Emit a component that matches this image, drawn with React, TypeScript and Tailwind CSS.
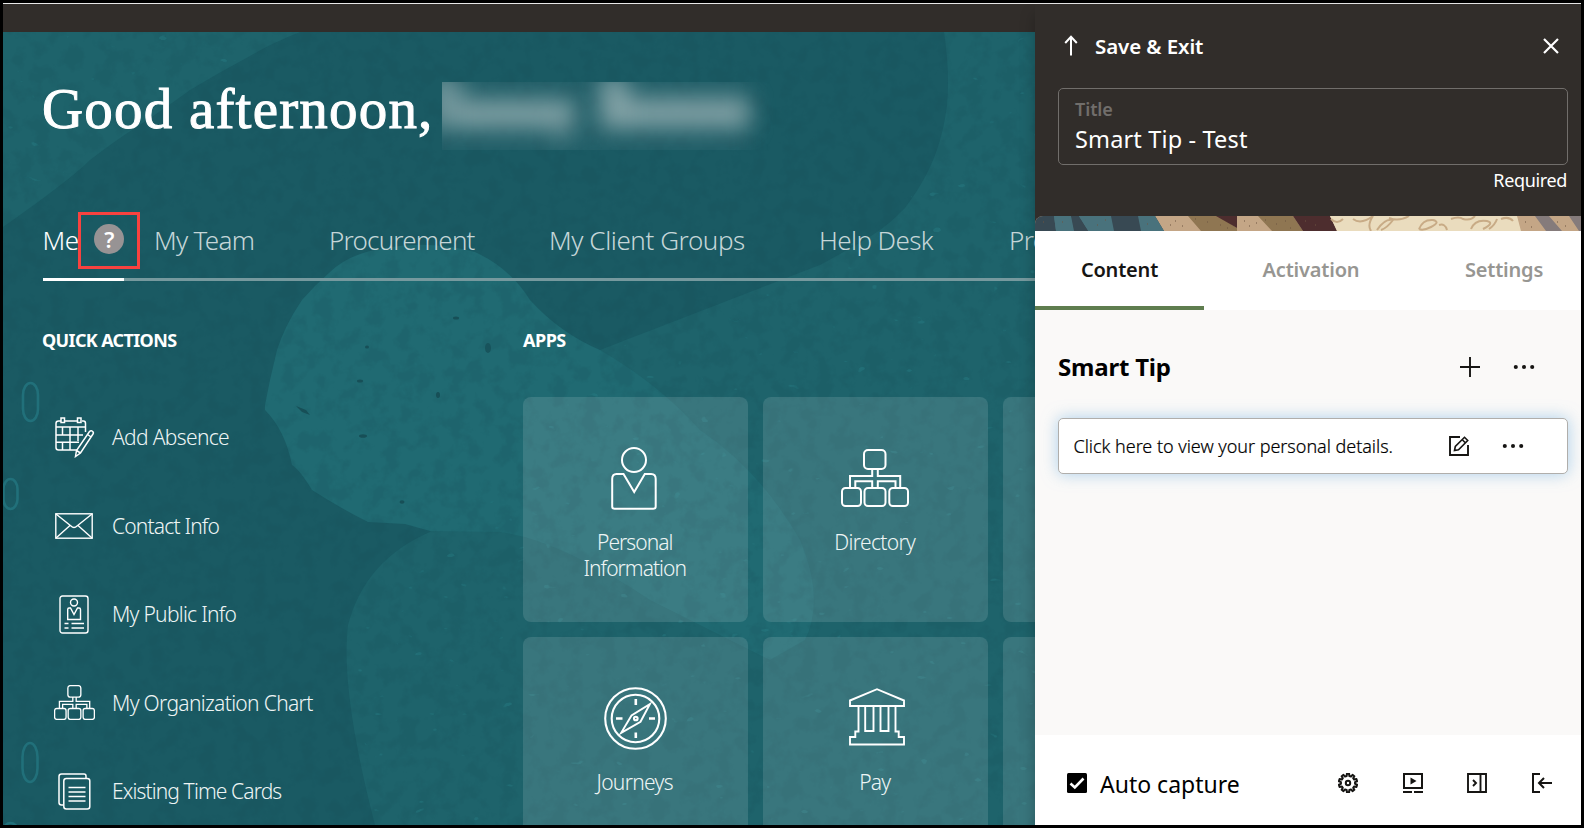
import React from "react";

const sans = "font-['Noto_Sans',sans-serif]";

function Backdrop() {
  return (
    <svg className="absolute inset-0 h-full w-full" viewBox="3 32 1032 793" preserveAspectRatio="none">
      <defs>
        <filter id="mottle" x="0" y="0" width="100%" height="100%" colorInterpolationFilters="sRGB">
          <feTurbulence type="fractalNoise" baseFrequency="0.06" numOctaves="4" seed="4" />
          <feColorMatrix values="0 0 0 0 0.09  0 0 0 0 0.30  0 0 0 0 0.34  5 0 0 0 -2.3" />
        </filter>
        <filter id="flecks" x="0" y="0" width="100%" height="100%" colorInterpolationFilters="sRGB">
          <feTurbulence type="fractalNoise" baseFrequency="0.07 0.12" numOctaves="2" seed="11" />
          <feColorMatrix values="0 0 0 0 0.16  0 0 0 0 0.50  0 0 0 0 0.53  14 0 0 0 -10.8" />
        </filter>
        <clipPath id="pale">
          <path d="M3 32H300L190 90L90 160L3 227ZM962 32L958 110L905 208L820 265L600 350L430 532L350 625L375 825H1035V32Z" />
        </clipPath>
      </defs>
      <rect x="3" y="32" width="1032" height="793" fill="#1a5a63" />
      <path d="M3 32H300Q270 44 250 56Q220 72 190 90Q160 112 132 130Q112 143 90 160Q70 180 3 227Z" fill="#1e636b" />
      <path d="M944 32C948 60 949 80 947 105C942 145 930 175 905 208C880 235 850 248 820 265C780 280 730 300 600 350L430 532Q365 560 348 625Q340 690 375 825H1035V32Z" fill="#1e636b" />
      <path d="M265 405L270 380L277 350Q285 325 302 300Q315 285 330 272Q350 253 385 248Q430 240 475 252Q510 268 530 300Q560 333 600 350Q660 385 700 430Q760 470 800 540Q825 600 805 640L770 660L650 600Q560 540 500 532L430 531L405 524L368 522Q340 508 312 490Q300 470 292 465Q285 430 265 410Z" fill="#206a72" />
      <rect x="3" y="32" width="1032" height="793" filter="url(#mottle)" opacity="0.17" />
      <g clipPath="url(#pale)">
        <rect x="3" y="32" width="1032" height="793" filter="url(#flecks)" opacity="0.4" />
      </g>
      <g fill="none" stroke="#21707a" strokeWidth="2.6">
        <rect x="23" y="383" width="15" height="38" rx="7.5" ry="12" />
        <rect x="3.500" y="479" width="14" height="30" rx="7" ry="10" />
        <rect x="22.500" y="743" width="15" height="39" rx="7.5" ry="14" />
        <rect x="3.500" y="823" width="14" height="30" rx="7" />
      </g>
      <g fill="#174f57">
        <ellipse cx="488" cy="348" rx="3" ry="5" opacity="0.8" />
        <path d="M296 406l10 4 4 5-8-3z" />
        <ellipse cx="360" cy="381" rx="3" ry="1.500" />
        <ellipse cx="438" cy="395" rx="2" ry="3" />
        <ellipse cx="363" cy="436" rx="4" ry="1.800" />
        <ellipse cx="367" cy="347" rx="2" ry="1.500" />
        <ellipse cx="402" cy="502" rx="2.500" ry="1.800" />
        <ellipse cx="456" cy="318" rx="3" ry="1.500" />
      </g>
    </svg>
  );
}

function OrgChart({ className, stroke }: { className: string; stroke: number }) {
  return (
    <svg className={className} viewBox="0 0 68 58" fill="none" stroke="white" strokeWidth={stroke}>
      <rect x="23" y="1" width="21.500" height="19" rx="4" />
      <rect x="1" y="39" width="19" height="18" rx="3.500" />
      <rect x="23.500" y="39" width="21" height="18" rx="3.500" />
      <rect x="48.300" y="39" width="18.700" height="18" rx="3.500" />
      <path d="M31.200 20V27H9V39M36.800 20V27H59.200V39M31.200 39V32.200H14.300V39M36.800 39V32.200H54.500V39" />
    </svg>
  );
}

const CalendarIcon = () => (
  <svg className="ml-[2px] h-[41px] w-[40px]" viewBox="0 0 40 41" fill="none" stroke="white" strokeWidth="1.500">
    <path d="M6 4H3.500Q1 4 1 6.500V30.500Q1 33 3.500 33H22M10 4H22M27 4H28.500Q30.500 4 30.500 6.500V15M1 10H30.500M1 18H28M1 25.300H24M7.500 10V17.500M15 10V33M23 10V24M7.500 25.500V33" />
    <rect x="6" y="1" width="3.500" height="4.500" />
    <rect x="22.500" y="1" width="3.500" height="4.500" />
    <path d="M34.500 14.500Q36 13 37.500 14.300Q39 15.500 38 17L25.500 36L20.500 39.500L21.500 33.500ZM32.500 17.500L36.200 20M21.500 33.500L25.500 36" />
  </svg>
);

const MailIcon = () => (
  <svg className="h-[26px] w-[38px]" viewBox="0 0 38 26" fill="none" stroke="white" strokeWidth="1.400">
    <rect x="0.800" y="0.800" width="36.400" height="24.400" />
    <path d="M1 1L16 13Q19 16 22 13L37 1M1 25L15 12.500M37 25L23 12.500" />
  </svg>
);

const BadgeIcon = () => (
  <svg className="h-[39px] w-[30px]" viewBox="0 0 30 39" fill="none" stroke="white" strokeWidth="1.400">
    <rect x="1" y="1" width="28" height="37" rx="2.500" />
    <circle cx="15" cy="7.500" r="3.500" />
    <path d="M11.500 13H10Q8.700 13 8.700 14.500V24.500H21.500V14.500Q21.500 13 20 13H18.500L15 19.500ZM5.500 28.500H9.500M12.500 28.500H25M5.500 33H9.500M12.500 33H25" />
  </svg>
);

const CardsIcon = () => (
  <svg className="h-[37px] w-[33px]" viewBox="0 0 33 37" fill="none" stroke="white" strokeWidth="1.500">
    <path d="M28 5.500V3Q28 1 26 1H3.500Q1 1 1 3.500V29.500Q1 32 3.500 32H5.500" />
    <rect x="5.800" y="5.500" width="26" height="30.500" rx="2.500" />
    <path d="M10.500 14.500H27.500M10.500 19H27.500M10.500 23.500H27.500M10.500 28H27.500" />
  </svg>
);

const PersonIcon = () => (
  <svg className="mr-[3px] h-[63px] w-[46px]" viewBox="0 0 46 63" fill="none" stroke="white" strokeWidth="2">
    <circle cx="23" cy="13" r="12" />
    <path d="M12.500 27H5.500Q1.200 27 1.200 32V59.500Q1.200 61.800 3.500 61.800H42.300Q44.700 61.800 44.700 59.500V32Q44.700 27 40.200 27H33.800L23.200 45Z" />
  </svg>
);

const CompassIcon = () => (
  <svg className="h-[63px] w-[63px]" viewBox="0 0 63 63" fill="none" stroke="white" strokeWidth="2.100">
    <circle cx="31.500" cy="31.500" r="30.300" />
    <circle cx="31.500" cy="31.500" r="23.800" />
    <path d="M45.800 17.200L36.500 34.800L17.200 45.800L27.500 28.500Z" strokeWidth="1.900" />
    <circle cx="31.800" cy="31.500" r="1.800" />
    <path d="M31.800 12V18M31.800 45.500V51M12 31.500H18.500M45 31.500H51" strokeWidth="2.600" />
  </svg>
);

const BankIcon = () => (
  <svg className="mb-[3px] ml-[2px] h-[58px] w-[56px]" viewBox="0 0 56 58" fill="none" stroke="white" strokeWidth="1.900">
    <path d="M1 12.500L28 1.200L55 12.500V18H1ZM9.500 18V43.500H6.300V49H1V56.500H55V49H49.700V43.500H46.500V18M16.200 18V43H24.500V18M31.500 18V43H39.500V18" />
  </svg>
);

const actions = [
  { label: "Add Absence", icon: <CalendarIcon />, cls: "tracking-[-0.66px]" },
  { label: "Contact Info", icon: <MailIcon />, cls: "tracking-[-0.82px]" },
  { label: "My Public Info", icon: <BadgeIcon />, cls: "tracking-[-0.72px]" },
  { label: "My Organization Chart", icon: <OrgChart className="h-[35px] w-[41px]" stroke={2.2} />, cls: "tracking-[-0.67px]" },
  { label: "Existing Time Cards", icon: <CardsIcon />, cls: "tracking-[-0.88px]" },
];

const apps = [
  { label: ["Personal", "Information"], icon: <PersonIcon />, cls: "tracking-[-0.97px]" },
  { label: ["Directory"], icon: <OrgChart className="mr-[1px] h-[58px] w-[68px]" stroke={2} />, cls: "tracking-[-0.68px]" },
  { label: [], icon: null, cls: "" },
  { label: ["Journeys"], icon: <CompassIcon />, cls: "tracking-[-0.68px]" },
  { label: ["Pay"], icon: <BankIcon />, cls: "tracking-[-0.8px]" },
  { label: [], icon: null, cls: "" },
];

const tabs = [
  { label: "My Team", cls: "w-[175px] tracking-[-0.7px]" },
  { label: "Procurement", cls: "w-[220px] tracking-[-0.78px]" },
  { label: "My Client Groups", cls: "w-[270px] tracking-[-0.42px]" },
  { label: "Help Desk", cls: "w-[190px] tracking-[-0.6px]" },
  { label: "Pro", cls: "w-[26px] tracking-[-0.68px]" },
];

function HomePage() {
  return (
    <div className="flex w-[1032px] shrink-0 flex-col overflow-hidden">
      <div className="h-[28px] shrink-0 bg-[#312d2a]" />
      <div className="relative h-[793px] overflow-hidden text-white">
        <Backdrop />
        <div className="relative flex h-full flex-col pt-[42px]">
          <div className="flex h-[76px] items-start pl-[39px]">
            <h1 className="w-[400px] shrink-0 whitespace-nowrap pt-px font-['Liberation_Serif',serif] text-[57px] leading-[68px] tracking-[1.2px] [-webkit-text-stroke:1px_white]">
              Good afternoon,
            </h1>
            <div className="mt-[8px] flex h-[68px] w-[350px] items-center overflow-hidden">
              <svg className="h-full w-full" viewBox="0 0 350 68">
                <defs>
                  <filter id="soft" x="-20%" y="-60%" width="140%" height="220%" colorInterpolationFilters="sRGB">
                    <feGaussianBlur stdDeviation="11" />
                  </filter>
                </defs>
                <g filter="url(#soft)" fill="#8fabae">
                  <rect x="-14" y="-6" width="34" height="52" opacity="0.7" />
                  <rect x="16" y="18" width="116" height="28" opacity="0.85" />
                  <rect x="108" y="38" width="22" height="26" opacity="0.25" />
                  <rect x="158" y="-6" width="28" height="52" opacity="0.85" />
                  <rect x="176" y="16" width="132" height="30" opacity="0.85" />
                  <rect x="-10" y="-10" width="316" height="90" opacity="0.08" />
                </g>
              </svg>
            </div>
          </div>

          <div className="mt-[70px] flex h-[40px] shrink-0 items-center whitespace-nowrap pl-[39.500px] text-[26px] font-light leading-[40px] text-[#c5d6d8]">
            <div className="relative w-[111.500px] shrink-0 tracking-[-0.4px] text-white">
              Me
              <div className="absolute left-[35.500px] top-[-8px] flex h-[57px] w-[62px] items-center justify-center border-[3px] border-[#f8423f] pb-[3px]">
                <span className="flex h-[30px] w-[30px] items-center justify-center rounded-full bg-[#979394] text-[22px] font-semibold leading-[30px]">
                  ?
                </span>
              </div>
            </div>
            {tabs.map((t, i) => (
              <div key={i} className={`shrink-0 ${t.cls}`}>{t.label}</div>
            ))}
          </div>
          <div className="ml-[40px] mt-[18px] flex h-[3px] shrink-0 bg-[#76999e]">
            <div className="w-[81px] bg-white" />
          </div>

          <div className="flex pl-[39px] pt-[46px]">
            <div className="w-[481px] shrink-0">
              <h2 className="text-[18px] font-bold leading-[26px] tracking-[-0.65px]">QUICK ACTIONS</h2>
              <ul className="mt-[41px]">
                {actions.map((a) => (
                  <li key={a.label} className="flex h-[88.400px] items-center">
                    <span className="flex w-[64px] justify-center pb-px">{a.icon}</span>
                    <span className={`ml-[6px] text-[21px] font-light text-[#eef5f5] ${a.cls}`}>{a.label}</span>
                  </li>
                ))}
              </ul>
            </div>
            <div className="shrink-0">
              <h2 className="text-[18px] font-bold leading-[26px] tracking-[-0.5px]">APPS</h2>
              <div className="mt-[44px] grid grid-cols-[225px_225px_225px] gap-[15px]">
                {apps.map((a, i) => (
                  <div key={i} className="flex h-[225px] flex-col items-center rounded-lg bg-white/12">
                    <div className="mt-[42px] flex h-[78px] items-center">{a.icon}</div>
                    <div className={`mt-[12px] pr-[1.500px] text-center text-[21px] font-light leading-[26px] text-[#eef5f5] ${a.cls}`}>
                      {a.label.map((l) => (
                        <div key={l}>{l}</div>
                      ))}
                    </div>
                  </div>
                ))}
              </div>
            </div>
          </div>
        </div>
      </div>
    </div>
  );
}

function Banner() {
  return (
    <svg className="block h-[15px] w-[546px] rounded-tl-[8px]" viewBox="0 0 546 15">
      <rect width="546" height="15" fill="#c4a686" />
      <path d="M0 0H120L129 15H0Z" fill="#384953" />
      <path d="M19 0H36L47 15H21ZM43.500 0H76L79 15H53ZM103 0H120L129 15H106Z" fill="#49727c" />
      <path d="M19 0H33L38 15H21Z" fill="#49727c" />
      <path d="M36 0H43.500L53 15H39Z" fill="#384953" />
      <path d="M153 0H183L202 12V15H166ZM223 0H258L268 15H237Z" fill="#8f7652" />
      <path d="M181 0H202V12ZM258 0H295L302 15H268Z" fill="#4d2d2e" />
      <path d="M295 0H482L486 15H302Z" fill="#eadcbe" />
      <path d="M500 0H514L527 15H511ZM534 0H546V15H544Z" fill="#857b7b" />
      <path
        d="M296 3q6 6 12 0M318 3q8 6 20-3q-6 9-2 15M342 14q8-12 16-10q-6 8-12 10M354 2q10 4 20-2M384 13q4-10 14-9q8 2-2 7q-8 4-12 2M404 9q6-2 8 5M416 3q8-3 12 0q8 2 12-3M436 13q4-10 16-8q8 2-4 8M454 13q6-4 8-10M466 3q8-3 12 2"
        fill="none"
        stroke="#c8ab86"
        strokeWidth="2"
      />
      <path
        d="M140 5h1M147 10h1M135 9h1M160 3h1M172 6h1M185 9h1M192 12h1M209 5h1M214 10h1M221 7h1M230 4h1M241 8h1M250 5h1M255 12h1M270 5h1M280 9h1M490 6h1M496 11h1M522 6h1M530 10h1M8 6h1M27 6h1M62 9h1M70 4h1M112 8h1"
        stroke="#6d5540"
        strokeWidth="1"
      />
    </svg>
  );
}

function Dots() {
  return (
    <svg className="h-[6px] w-[22px]" viewBox="0 0 22 6" fill="#161513">
      <circle cx="2.800" cy="3" r="2.050" />
      <circle cx="11" cy="3" r="2.050" />
      <circle cx="19.200" cy="3" r="2.050" />
    </svg>
  );
}

const teeth = Array.from({ length: 10 }, (_, i) => {
  const pts: [number, number][] = [[7.1, -11], [9.300, -7], [9.300, 7], [7.1, 11]];
  return pts
    .map(([r, off]) => {
      const a = ((i * 36 - 90 + off) * Math.PI) / 180;
      return `${(10 + r * Math.cos(a)).toFixed(2)},${(10 + r * Math.sin(a)).toFixed(2)}`;
    })
    .join(" ");
}).join(" ");

function GuidePanel() {
  return (
    <div className="relative flex w-[546px] shrink-0 flex-col bg-white shadow-[0_10px_14px_rgba(0,0,0,0.25)]">
      <div className="flex h-[227px] shrink-0 flex-col bg-[#312d2a] text-white">
        <div className="flex h-[84px] shrink-0 items-center pl-[29px] pr-[21px]">
          <svg className="h-[22px] w-[14px]" viewBox="0 0 14 22" fill="none" stroke="white" strokeWidth="2">
            <path d="M7 20.500V2M1.200 8L7 1.800L12.800 8" />
          </svg>
          <span className="ml-[17px] flex-1 text-[20.500px] font-semibold tracking-[-0.1px]">Save &amp; Exit</span>
          <svg className="h-[18px] w-[18px]" viewBox="0 0 18 18" fill="none" stroke="white" strokeWidth="2.200">
            <path d="M2 2L16 16M16 2L2 16" />
          </svg>
        </div>
        <div className="ml-[23px] h-[77px] w-[510px] shrink-0 rounded-[5px] border border-[#716e6b] pl-[16px] pt-[8px]">
          <div className="text-[18px] font-semibold leading-[24px] tracking-[-0.1px] text-[#716e6b]">Title</div>
          <div className="mt-[3px] text-[23.500px] leading-[30px] tracking-[0.15px]">Smart Tip - Test</div>
        </div>
        <div className="mt-[3px] pr-[14px] text-right text-[18px] leading-[24px] tracking-[-0.35px]">Required</div>
        <div className="mt-auto">
          <Banner />
        </div>
      </div>
      <div className="flex h-[79px] shrink-0 text-[20px] font-semibold leading-[77px] tracking-[-0.2px] text-[#979692]">
        <div className="w-[169px] border-b-4 border-[#5f7d4f] text-center text-[#161513]">Content</div>
        <div className="w-[214px] text-center">Activation</div>
        <div className="ml-auto w-[154px] text-center">Settings</div>
      </div>
      <div className="h-[425px] shrink-0 bg-[#faf9f8] pl-[23px] pt-[37px] text-black">
        <div className="flex h-[40px] items-center">
          <h3 className="w-[401px] text-[24px] font-bold leading-[40px] tracking-[-0.2px]">Smart Tip</h3>
          <svg className="h-[22px] w-[22px]" viewBox="0 0 22 22" stroke="#161513" strokeWidth="1.900">
            <path d="M11 1V21M1 11H21" />
          </svg>
          <span className="ml-[32px] flex"><Dots /></span>
        </div>
        <div className="mt-[31px] flex h-[56px] w-[510px] items-center rounded-[5px] border border-[#b0aeab] bg-white pl-[14.500px] shadow-[0_0_16px_rgba(120,180,225,0.6)]">
          <span className="w-[374.500px] whitespace-nowrap text-[18px] font-light tracking-[-0.03px] [-webkit-text-stroke:0.2px_black]">
            Click here to view your personal details.
          </span>
          <svg className="h-[22px] w-[22px]" viewBox="0 0 22 22" fill="none" stroke="#161513" strokeWidth="1.900">
            <path d="M12 2H2V20H20V10" />
            <path d="M6.500 15.500L7.300 11.500L16.500 2.300L19.700 5.500L10.500 14.700ZM14.300 4.700L17.300 7.700" strokeWidth="1.600" />
          </svg>
          <span className="ml-[32px] flex"><Dots /></span>
        </div>
      </div>
      <div className="flex h-[90px] shrink-0 items-center pl-[32px] pr-[29px] pt-[6px]">
        <svg className="h-[20px] w-[20px]" viewBox="0 0 20 20">
          <rect width="20" height="20" rx="1.500" fill="black" />
          <path d="M3.500 10.500L7.800 14.500L16.500 5.500" fill="none" stroke="white" strokeWidth="2.600" />
        </svg>
        <span className="ml-[13px] pt-[2px] text-[23px] leading-[40px] text-black">Auto capture</span>
        <div className="ml-auto flex gap-[44.700px] text-[#161513]">
          <svg className="h-[20px] w-[20px]" viewBox="0 0 20 20" fill="none" stroke="currentColor" strokeWidth="2">
            <polygon points={teeth} strokeLinejoin="round" />
            <circle cx="10" cy="10" r="2.200" />
          </svg>
          <svg className="h-[20px] w-[20px]" viewBox="0 0 20 20" fill="none" stroke="currentColor" strokeWidth="2">
            <path d="M1 1H19V15H1ZM0 19H9M11 19H20" />
            <path d="M7.500 4.500L13.500 8L7.500 11.500Z" fill="currentColor" stroke="none" />
          </svg>
          <svg className="h-[20px] w-[20px]" viewBox="0 0 20 20" fill="none" stroke="currentColor" strokeWidth="1.900">
            <path d="M1 1H19V19H1ZM13.500 1V19M6 7L9 10L6 13" />
          </svg>
          <svg className="h-[20px] w-[20px]" viewBox="0 0 20 20" fill="none" stroke="currentColor" strokeWidth="2">
            <path d="M8 1H1V19H8M20 10H7.500M12 5L7 10L12 15" />
          </svg>
        </div>
      </div>
    </div>
  );
}

export default function App() {
  return (
    <div className={`h-[828px] w-[1584px] overflow-hidden bg-black p-[3px] ${sans}`}>
      <div className="flex h-[822px] flex-col overflow-hidden">
        <div className="h-[1px] shrink-0 bg-[#e8e8e8]" />
        <div className="flex h-[821px]">
          <HomePage />
          <GuidePanel />
        </div>
      </div>
    </div>
  );
}
